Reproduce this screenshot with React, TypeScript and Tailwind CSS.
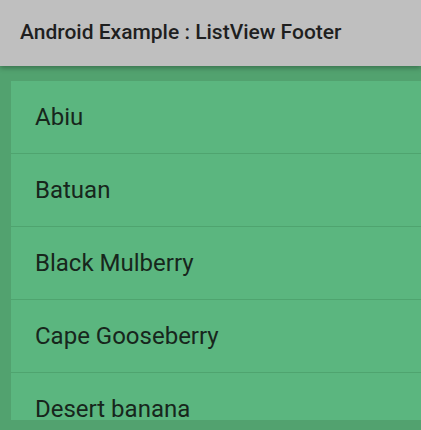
const fruits = ['Abiu', 'Batuan', 'Black Mulberry', 'Cape Gooseberry', 'Desert banana'];

const App = () => {
  return (
    <div className="h-[430px] w-[421px] overflow-hidden bg-[#52a26f] font-['Roboto',sans-serif]">
      <div className="relative z-10 flex h-[66px] items-center bg-[#bfbfbf] px-5 shadow-[0_2px_5px_rgba(0,0,0,0.3)]">
        <h1 className="text-[21px] font-medium text-[#1f1f1f]">Android Example : ListView Footer</h1>
      </div>
      <div className="pl-[11px] pt-[15px] pb-[10px]">
        <ul className="h-[339px] overflow-hidden bg-[#5bb67f]">
          {fruits.map((name) => (
            <li key={name} className="flex h-[73px] items-center border-b border-[#4fa46f] pl-6 text-[24px] text-[#17261c]">
              {name}
            </li>
          ))}
        </ul>
      </div>
    </div>
  );
};

export default App;
